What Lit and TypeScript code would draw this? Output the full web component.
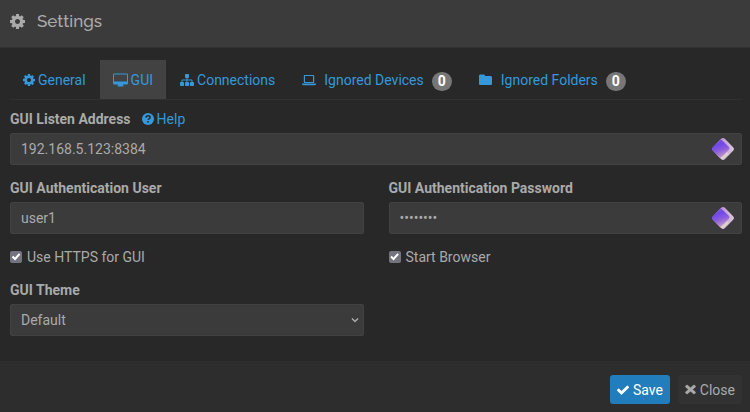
import { LitElement, html, css, svg } from "lit";
import { customElement, state } from "lit/decorators.js";

const glyphs = {
  cog: {
    box: "128 128 1536 1536",
    art: svg`<path d="M1152 896q0-106-75-181t-181-75-181 75-75 181 75 181 181 75 181-75 75-181zm512-109v222q0 12-8 23t-20 13l-185 28q-19 54-39 91 35 50 107 138 10 12 10 25t-9 23q-27 37-99 108t-94 71q-12 0-26-9l-138-108q-44 23-91 38-16 136-29 186-7 28-36 28h-222q-14 0-24.500-8.500t-11.500-21.500l-28-184q-49-16-90-37l-141 107q-10 9-25 9-14 0-25-11-126-114-165-168-7-10-7-23 0-12 8-23 15-21 51-66.500t54-70.500q-27-50-41-99l-183-27q-13-2-21-12.500t-8-23.500v-222q0-12 8-23t19-13l186-28q14-46 39-92-40-57-107-138-10-12-10-24 0-10 9-23 26-36 98.500-107.500t94.500-71.500q13 0 26 10l138 107q44-23 91-38 16-136 29-186 7-28 36-28h222q14 0 24.500 8.500t11.500 21.500l28 184q49 16 90 37l142-107q9-9 24-9 13 0 25 10 129 119 165 170 7 8 7 22 0 12-8 23-15 21-51 66.500t-54 70.500q26 50 41 98l183 28q13 2 21 12.500t8 23.500z"/>`,
  },
  desktop: {
    box: "0 0 15 14",
    art: svg`<path fill-rule="evenodd" d="M1.200 0.500h12.600a1.200 1.200 0 0 1 1.200 1.200v8.600a1.200 1.200 0 0 1-1.200 1.200H10c0 .8.500 1.200.500 1.600s-.2.500-.5.500H5c-.3 0-.5-.2-.5-.5s.5-.8.500-1.600H1.200A1.200 1.200 0 0 1 0 10.300V1.700A1.200 1.200 0 0 1 1.200.5zM1 1.700v6.900h13V1.700a.2.200 0 0 0-.2-.2H1.200a.2.200 0 0 0-.2.200z"/>`,
  },
  sitemap: {
    box: "0 0 14 14",
    art: svg`<path d="M5.700 1h2.600c.4 0 .7.300.7.700v2.600c0 .4-.3.700-.7.700h-.8v1.500h4c.6 0 1 .4 1 1V9h.8c.4 0 .7.300.7.700v2.600c0 .4-.3.700-.7.700h-2.600c-.4 0-.7-.3-.7-.7V9.700c0-.4.300-.7.700-.7h.8V7.500h-4V9h.8c.4 0 .7.300.7.700v2.600c0 .4-.3.700-.7.700H5.700c-.4 0-.7-.3-.7-.7V9.700c0-.4.300-.7.700-.7h.8V7.500h-4V9h.8c.4 0 .7.300.7.700v2.600c0 .4-.3.700-.7.700H.7c-.4 0-.7-.3-.7-.7V9.700C0 9.300.3 9 .7 9h.8V7.500c0-.6.400-1 1-1h4V5h-.8c-.4 0-.7-.3-.7-.7V1.700c0-.4.300-.7.700-.7z"/>`,
  },
  laptop: {
    box: "0 0 14 14",
    art: svg`<path fill-rule="evenodd" d="M2.800 2h8.400c.6 0 1 .4 1 1v6c0 .6-.4 1-1 1H2.800c-.6 0-1-.4-1-1V3c0-.6.400-1 1-1zm.2 1v6h8V3zM0 10.600h14v.7c0 .5-.6.900-1.200.9H1.200c-.6 0-1.200-.4-1.200-.9z"/>`,
  },
  folder: {
    box: "0 0 14 14",
    art: svg`<path d="M1.300 1.500h3.400c.7 0 1.300.6 1.300 1.300V3h5.700c.7 0 1.300.6 1.300 1.300v6.400c0 .7-.6 1.300-1.300 1.300H1.300C.6 12 0 11.400 0 10.700V2.800c0-.7.600-1.300 1.300-1.300z"/>`,
  },
  help: {
    box: "0 0 12 12",
    art: svg`<circle cx="6" cy="6" r="6"/><path d="M4 4.600C4.100 3.300 5 2.700 6.100 2.700c1.100 0 2 .7 2 1.700 0 1.300-1.900 1.400-1.900 2.700" fill="none" stroke="#282828" stroke-width="1.500"/><rect x="5.300" y="8.100" width="1.600" height="1.500" fill="#282828"/>`,
  },
  check: {
    box: "0 0 512 512",
    art: svg`<path d="M173.900 449.400l-166.400-166.400c-10-10-10-26.200 0-36.200l46.200-46.200c10-10 26.200-10 36.200 0L192 302.700 422.100 72.600c10-10 26.200-10 36.200 0l46.200 46.200c10 10 10 26.200 0 36.200l-294.400 294.400c-10 10-26.200 10-36.200 0z"/>`,
  },
  times: {
    box: "0 0 12 12",
    art: svg`<path stroke="currentColor" stroke-width=".5" d="M2.500 1.200 6 4.100l3.500-2.900a.6.600 0 0 1 .8 0l1.200 1.200a.6.600 0 0 1 0 .8L8.300 6l3.200 2.800a.6.600 0 0 1 0 .8l-1.200 1.200a.6.600 0 0 1-.8 0L6 7.900l-3.500 2.900a.6.600 0 0 1-.8 0L.5 9.600a.6.600 0 0 1 0-.8L3.700 6 .5 3.200a.6.600 0 0 1 0-.8l1.200-1.200a.6.600 0 0 1 .8 0z"/>`,
  },
};

type GlyphName = keyof typeof glyphs;

const icon = (name: GlyphName) =>
  html`<svg class="icon ${name}" viewBox=${glyphs[name].box} aria-hidden="true">${glyphs[name].art}</svg>`;

const vaultBadge = html`<svg class="vault" viewBox="0 0 22 22" aria-hidden="true">
  <defs>
    <linearGradient id="edge" x1="0" y1="0" x2="1" y2="0">
      <stop offset="0" stop-color="#9a66d4" />
      <stop offset="0.5" stop-color="#c39bce" />
      <stop offset="1" stop-color="#d9cbdc" />
    </linearGradient>
    <linearGradient id="face" x1="0.3" y1="0" x2="0.6" y2="1">
      <stop offset="0" stop-color="#8658dc" />
      <stop offset="0.3" stop-color="#7048ea" />
      <stop offset="0.55" stop-color="#8a5cde" />
      <stop offset="0.8" stop-color="#b68ccd" />
      <stop offset="1" stop-color="#bfae9f" />
    </linearGradient>
    <clipPath id="gem">
      <rect x="2.500" y="2.500" width="17" height="17" rx="3" transform="rotate(45 11 11)" />
    </clipPath>
  </defs>
  <g clip-path="url(#gem)">
    <rect width="22" height="22" fill="url(#edge)" />
    <path fill="url(#face)" d="M0 0h7.500l9.300 8.800a2 2 0 0 1 0 2.900L6.500 22H0z" />
    <path fill="#ddd0cf" d="M12 17l3-3 2 2-6 6-3-2z" />
  </g>
</svg>`;

const tabs: { id: string; label: string; icon: GlyphName; count?: number }[] = [
  { id: "general", label: "General", icon: "cog" },
  { id: "gui", label: "GUI", icon: "desktop" },
  { id: "connections", label: "Connections", icon: "sitemap" },
  { id: "devices", label: "Ignored Devices", icon: "laptop", count: 0 },
  { id: "folders", label: "Ignored Folders", icon: "folder", count: 0 },
];

@customElement("app-root")
export class AppRoot extends LitElement {
  @state() private active = "gui";

  static styles = css`
    :host {
      display: flex;
      flex-direction: column;
      min-height: 100vh;
      background: #282828;
      color: #aaa;
      font: 14px/20px Roboto, "Liberation Sans", sans-serif;
    }
    * { box-sizing: border-box; }
    a { color: #3498db; text-decoration: none; }
    .icon { width: 14px; height: 14px; flex: none; fill: currentColor; }
    header {
      display: flex;
      align-items: center;
      gap: 12px;
      padding: 6px 10px 11px;
      background: #3b3b3b;
      border-bottom: 1px solid #323232;
    }
    h1 { margin: 0; font: 500 17px/30px Raleway, Lato, sans-serif; }
    header .icon { width: 15px; height: 15px; }
    main { flex: 1; padding: 12px 8px 24px 10px; }
    nav { display: flex; gap: 1px; border-bottom: 1px solid #303030; }
    .tab {
      display: flex;
      align-items: center;
      gap: 3px;
      height: 39px;
      padding: 0 13px;
      white-space: nowrap;
    }
    .tab.active { background: #424242; }
    .tab .cog, .help { width: 12px; height: 12px; }
    .tab .desktop { width: 15px; }
    .tab.counted { gap: 8px; }
    .badge {
      min-width: 20px;
      height: 19px;
      margin-top: 3px;
      border-radius: 10px;
      background: #777;
      color: #fff;
      font-weight: 700;
      line-height: 19px;
      text-align: center;
    }
    .grid {
      display: grid;
      grid-template-columns: 1fr 1fr;
      column-gap: 25px;
      row-gap: 13px;
      padding-top: 9px;
    }
    .wide { grid-column: 1 / -1; }
    .caption { display: flex; gap: 11px; margin-bottom: 4px; }
    .caption label { font-weight: 700; }
    .caption a { display: flex; align-items: center; gap: 3px; }
    .box { display: flex; position: relative; }
    .control {
      width: 100%;
      height: 32px;
      padding: 0 10px;
      border: 1px solid #424242;
      border-radius: 2px;
      background: #3b3b3b;
      color: #aaa;
      font: inherit;
      outline: 0;
    }
    select.control { appearance: none; }
    .vault { position: absolute; right: 8px; top: 5px; width: 22px; height: 22px; }
    .chevron {
      position: absolute;
      right: 5px;
      top: 12px;
      width: 8px;
      height: 8px;
      fill: none;
      stroke: #aaa;
      stroke-width: 1.5;
      pointer-events: none;
    }
    .tick { display: flex; align-items: center; gap: 5px; }
    .tick input {
      appearance: none;
      display: grid;
      place-items: center;
      width: 12px;
      height: 12px;
      margin: 0;
      border-radius: 2px;
      background: #dcdce2;
    }
    .tick input:checked { background: #74747f; }
    .tick input:checked::before {
      content: "";
      width: 10px;
      height: 10px;
      background: #fff;
      clip-path: polygon(8% 52%, 22% 38%, 40% 56%, 78% 12%, 94% 26%, 41% 86%);
    }
    footer {
      display: flex;
      justify-content: flex-end;
      gap: 8px;
      padding: 14px 8px 8px;
      background: #2d2d2d;
    }
    button {
      display: flex;
      align-items: center;
      gap: 4px;
      height: 29px;
      padding: 0 7px;
      border: 0;
      border-radius: 3px;
      background: #323232;
      color: #aaa;
      font: inherit;
    }
    button .icon { width: 12px; height: 12px; }
    button .times { width: 11px; height: 11px; }
    button.primary { background: #217dbb; color: #fff; }
  `;

  private pick(e: Event, id: string) {
    e.preventDefault();
    this.active = id;
  }

  render() {
    return html`
      <header>${icon("cog")}<h1>Settings</h1></header>
      <main>
        <nav>
          ${tabs.map(
            (t) => html`<a
              href="#${t.id}"
              class="tab ${t.id === this.active ? "active" : ""} ${t.count === undefined ? "" : "counted"}"
              @click=${(e: Event) => this.pick(e, t.id)}
              >${icon(t.icon)}<span>${t.label}</span>${t.count === undefined
                ? ""
                : html`<span class="badge">${t.count}</span>`}</a
            >`
          )}
        </nav>
        <form class="grid">
          <div class="wide">
            <div class="caption">
              <label for="address">GUI Listen Address</label>
              <a href="#help">${icon("help")}<span>Help</span></a>
            </div>
            <div class="box"><input class="control" id="address" type="text" .value=${"192.168.5.123:8384"} />${vaultBadge}</div>
          </div>
          <div>
            <div class="caption"><label for="user">GUI Authentication User</label></div>
            <div class="box"><input class="control" id="user" type="text" .value=${"user1"} /></div>
          </div>
          <div>
            <div class="caption"><label for="password">GUI Authentication Password</label></div>
            <div class="box"><input class="control" id="password" type="password" .value=${"password"} />${vaultBadge}</div>
          </div>
          <label class="tick"><input type="checkbox" checked /><span>Use HTTPS for GUI</span></label>
          <label class="tick"><input type="checkbox" checked /><span>Start Browser</span></label>
          <div>
            <div class="caption"><label for="theme">GUI Theme</label></div>
            <div class="box">
              <select class="control" id="theme"><option>Default</option></select>
              <svg class="chevron" viewBox="0 0 8 8" aria-hidden="true"><path d="M1 2.500l3 3 3-3" /></svg>
            </div>
          </div>
        </form>
      </main>
      <footer>
        <button type="button" class="primary">${icon("check")}<span>Save</span></button>
        <button type="button">${icon("times")}<span>Close</span></button>
      </footer>
    `;
  }
}
